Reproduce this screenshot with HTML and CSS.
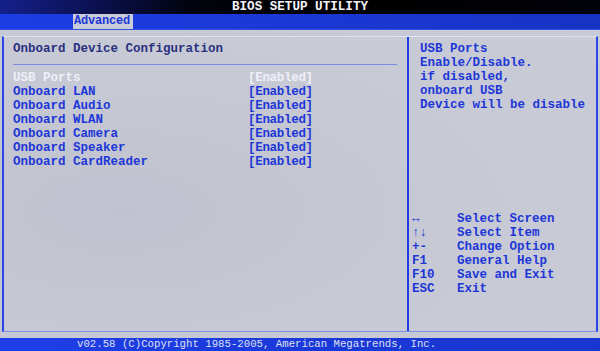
FILE: index.html
```html
<!DOCTYPE html>
<html>
<head>
<meta charset="utf-8">
<link rel="stylesheet" href="styles.css">
</head>
<body>
<div class="screen">
  <div class="top">
    <div class="title">BIOS SETUP UTILITY</div>
    <div class="tabs"><span class="tab">Advanced</span></div>
  </div>
  <div class="main">
    <div class="frame">
      <div class="left">
        <div class="heading">Onboard Device Configuration</div>
        <div class="rule"></div>
        <div class="items">
          <div class="row sel"><span class="name">USB Ports</span><span class="val">[Enabled]</span></div>
          <div class="row"><span class="name">Onboard LAN</span><span class="val">[Enabled]</span></div>
          <div class="row"><span class="name">Onboard Audio</span><span class="val">[Enabled]</span></div>
          <div class="row"><span class="name">Onboard WLAN</span><span class="val">[Enabled]</span></div>
          <div class="row"><span class="name">Onboard Camera</span><span class="val">[Enabled]</span></div>
          <div class="row"><span class="name">Onboard Speaker</span><span class="val">[Enabled]</span></div>
          <div class="row"><span class="name">Onboard CardReader</span><span class="val">[Enabled]</span></div>
        </div>
      </div>
      <div class="right">
        <div class="help">
          <div class="line">USB Ports</div>
          <div class="line">Enable/Disable.</div>
          <div class="line">if disabled,</div>
          <div class="line">onboard USB</div>
          <div class="line">Device will be disable</div>
        </div>
        <div class="keys">
          <div class="key"><span class="k">↔</span><span>Select Screen</span></div>
          <div class="key"><span class="k">↑↓</span><span>Select Item</span></div>
          <div class="key"><span class="k">+-</span><span>Change Option</span></div>
          <div class="key"><span class="k">F1</span><span>General Help</span></div>
          <div class="key"><span class="k">F10</span><span>Save and Exit</span></div>
          <div class="key"><span class="k">ESC</span><span>Exit</span></div>
        </div>
      </div>
    </div>
  </div>
  <div class="footer">v02.58 (C)Copyright 1985-2005, American Megatrends, Inc.</div>
</div>
</body>
</html>
```
FILE: styles.css
```css
html, body {
  margin: 0;
  padding: 0;
}
body {
  width: 600px;
  height: 351px;
  overflow: hidden;
  background: #c5c8d2;
  font-family: "Liberation Mono", "DejaVu Sans Mono", monospace;
  font-weight: bold;
  color: #1d36d8;
}
.screen {
  width: 600px;
  height: 351px;
  display: flex;
  flex-direction: column;
  background: radial-gradient(ellipse at 20% 60%, #c0c3cf 0%, #c7cad4 50%, #c9ccd6 100%);
}
.top {
  height: 29px;
  display: flex;
  flex-direction: column;
}
.title {
  height: 14px;
  line-height: 15px;
  font-size: 12.6px;
  color: #f4f4f8;
  text-align: center;
  background: linear-gradient(90deg, #14208a 0%, #0a0f48 18%, #02030c 32%, #000 60%, #02030a 100%);
}
.tabs {
  height: 15px;
  background: linear-gradient(90deg, #1c3de4 0%, #1a38d4 50%, #1733c4 100%);
  padding-left: 73px;
  display: flex;
}
.tab {
  background: #c8cbd8;
  width: 60px;
  height: 15px;
  font-size: 12px;
  line-height: 15px;
  padding-left: 1px;
  box-sizing: border-box;
  color: #1d36d8;
  letter-spacing: -0.2px;
}
.main {
  flex: 1;
  padding-top: 6px;
  border-top: 1px solid #3450e4;
  box-sizing: border-box;
}
.frame {
  margin-left: 2px;
  width: 596px;
  height: 296px;
  box-sizing: border-box;
  border-left: 2px solid #2a46ea;
  border-right: 2px solid #2a46ea;
  border-top: 1px solid #dfe2f2;
  border-bottom: 1px solid #7e8ee4;
  display: flex;
}
.left {
  width: 405px;
  border-right: 2px solid #1f3ae6;
  padding: 5px 0 0 9px;
  box-sizing: border-box;
}
.heading {
  font-size: 12.5px;
  line-height: 14px;
  color: #2a3080;
}
.rule {
  height: 1px;
  background: #7a8ce6;
  width: 384px;
  margin: 8px 0 6px;
}
.row {
  display: flex;
  font-size: 12.5px;
  line-height: 14px;
}
.name {
  width: 235px;
  white-space: pre;
}
.val {
  white-space: pre;
  letter-spacing: -0.3px;
}
.sel {
  color: #eef0f8;
}
.right {
  flex: 1;
  padding: 5px 0 0 3px;
  box-sizing: border-box;
  font-size: 12.5px;
  line-height: 14px;
}
.help {
  padding-left: 8px;
  height: 170px;
}
.line {
  white-space: pre;
}
.key {
  display: flex;
}
.key span {
  white-space: pre;
}
.k {
  width: 45px;
}
.footer {
  height: 13px;
  background: linear-gradient(90deg, #1e3ee8 0%, #1a38d8 60%, #1a36d0 100%);
  color: #dde0f0;
  font-size: 10.7px;
  line-height: 13px;
  font-weight: normal;
  padding-left: 77px;
  white-space: pre;
}
```
